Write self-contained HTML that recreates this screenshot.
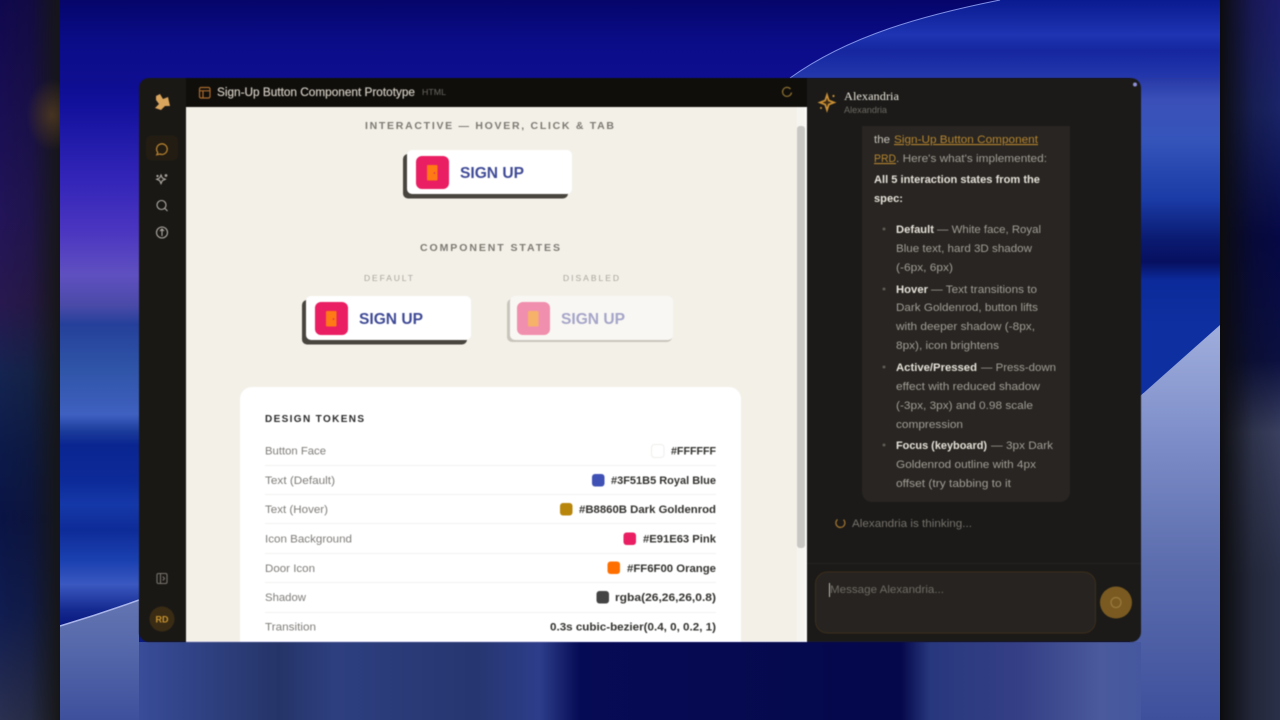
<!DOCTYPE html>
<html><head><meta charset="utf-8"><title>Sign-Up Button Component Prototype</title>
<style>
html,body{margin:0;padding:0;width:1280px;height:720px;overflow:hidden;background:#05084a}
svg{position:absolute;left:0;top:0;display:block}
#ui{filter:blur(.45px)}
text{font-family:"Liberation Sans",sans-serif;white-space:pre}
.b{font-weight:700}
.lb{font-size:11px;fill:#7f7d79}
.vl{font-size:11px;font-weight:700;fill:#33322f}
.ch{font-size:11px;fill:#a19d95}
.st{font-size:11px;font-weight:700;fill:#e6e2d9}
</style></head><body>
<svg width="1280" height="720" viewBox="0 0 1280 720">
<defs>
<linearGradient id="lft" x1="0" y1="0" x2="0" y2="1">
<stop offset="0" stop-color="#050565"/><stop offset=".14" stop-color="#10109a"/><stop offset=".25" stop-color="#3325b8"/><stop offset=".32" stop-color="#4a35c0"/><stop offset=".382" stop-color="#5f50c0"/><stop offset=".424" stop-color="#4a4aa8"/><stop offset=".451" stop-color="#25409a"/><stop offset=".514" stop-color="#2f55a8"/><stop offset=".576" stop-color="#3f60c0"/><stop offset=".6" stop-color="#1a3a9a"/><stop offset=".618" stop-color="#0a2590"/><stop offset=".667" stop-color="#0c2a98"/><stop offset=".701" stop-color="#1538a8"/><stop offset=".736" stop-color="#0e2c98"/><stop offset=".778" stop-color="#1a40b0"/><stop offset=".812" stop-color="#3a58c0"/><stop offset=".847" stop-color="#152a90"/><stop offset=".865" stop-color="#0a1a80"/><stop offset="1" stop-color="#0a1a80"/>
</linearGradient>
<linearGradient id="rgt" x1="0" y1="0" x2="0" y2="1">
<stop offset="0" stop-color="#0a1a90"/><stop offset=".035" stop-color="#2038b0"/><stop offset=".097" stop-color="#2030a0"/><stop offset=".139" stop-color="#3a50b8"/><stop offset=".194" stop-color="#3555bb"/><stop offset=".278" stop-color="#1a3aa5"/><stop offset=".333" stop-color="#0a1a70"/><stop offset=".364" stop-color="#071060"/><stop offset=".389" stop-color="#0c2a9a"/><stop offset=".45" stop-color="#0e2fa0"/><stop offset="1" stop-color="#0e2fa0"/>
</linearGradient>
<linearGradient id="lgt" x1="0" y1="0" x2="0" y2="1">
<stop offset="0" stop-color="#a0aedc"/><stop offset=".3" stop-color="#7c8cc8"/><stop offset=".6" stop-color="#5d6eae"/><stop offset="1" stop-color="#3e509c"/>
</linearGradient>
<linearGradient id="bot" gradientUnits="userSpaceOnUse" x1="139" y1="0" x2="1141" y2="0">
<stop offset="0" stop-color="#384c98"/><stop offset=".14" stop-color="#253468"/><stop offset=".195" stop-color="#2e3f80"/><stop offset=".335" stop-color="#263670"/><stop offset=".4" stop-color="#2d3d8a"/><stop offset=".44" stop-color="#060b55"/><stop offset=".76" stop-color="#05084a"/><stop offset=".79" stop-color="#28387e"/><stop offset=".88" stop-color="#353f85"/><stop offset=".96" stop-color="#4a5a9c"/><stop offset="1" stop-color="#45579f"/>
</linearGradient>
<linearGradient id="arcb" x1="0" y1="0" x2="0" y2="1">
<stop offset="0" stop-color="#6575b2"/><stop offset=".4" stop-color="#5568aa"/><stop offset="1" stop-color="#3e509c"/>
</linearGradient>
<linearGradient id="top" x1="0" y1="0" x2="0" y2="1">
<stop offset="0" stop-color="#05056a"/><stop offset=".5" stop-color="#0a0c86"/><stop offset="1" stop-color="#0e0e90"/>
</linearGradient>
<linearGradient id="topr" x1="0" y1="0" x2="0" y2="1">
<stop offset="0" stop-color="#0a1a90"/><stop offset=".45" stop-color="#1e34b2"/><stop offset=".65" stop-color="#15269f"/><stop offset="1" stop-color="#2438ac"/>
</linearGradient>
<linearGradient id="sl" x1="0" y1="0" x2="0" y2="1">
<stop offset="0" stop-color="#10084e"/><stop offset=".3" stop-color="#221458"/><stop offset=".42" stop-color="#28184f"/><stop offset=".52" stop-color="#142450"/><stop offset=".62" stop-color="#0c1a4a"/><stop offset=".72" stop-color="#0a1445"/><stop offset=".85" stop-color="#101c50"/><stop offset="1" stop-color="#2a3050"/>
</linearGradient>
<linearGradient id="slf" x1="0" y1="0" x2="1" y2="0">
<stop offset="0" stop-color="#161616" stop-opacity="0"/><stop offset=".5" stop-color="#161616" stop-opacity=".2"/><stop offset="1" stop-color="#161616"/>
</linearGradient>
<linearGradient id="sr" x1="0" y1="0" x2="0" y2="1">
<stop offset="0" stop-color="#1c1c6c"/><stop offset=".15" stop-color="#1a2468"/><stop offset=".33" stop-color="#050845"/><stop offset=".5" stop-color="#0b1040"/><stop offset=".6" stop-color="#3a4060"/><stop offset=".8" stop-color="#2a3048"/><stop offset="1" stop-color="#2a3048"/>
</linearGradient>
<linearGradient id="srf" x1="0" y1="0" x2="1" y2="0">
<stop offset="0" stop-color="#0c0c0e"/><stop offset=".55" stop-color="#0c0c0e" stop-opacity=".25"/><stop offset="1" stop-color="#0c0c0e" stop-opacity="0"/>
</linearGradient>
<radialGradient id="glow"><stop offset="0" stop-color="#5a4020" stop-opacity=".7"/><stop offset="1" stop-color="#5a4020" stop-opacity="0"/></radialGradient>
<clipPath id="ls"><rect x="0" y="0" width="60" height="720"/></clipPath>
</defs>
<rect x="60" y="0" width="1160" height="720" fill="#0a0c86"/>
<rect x="60" y="0" width="90" height="720" fill="url(#lft)"/>
<rect x="1130" y="0" width="90" height="720" fill="url(#rgt)"/>
<path d="M1130 405L1220 325V720H1130Z" fill="url(#lgt)"/>
<rect x="60" y="0" width="1160" height="78" fill="url(#top)"/>
<path d="M790 78C850 35 925 15 1000 0H1220V78Z" fill="url(#topr)"/>
<path d="M790 78C850 35 925 15 1000 0" fill="none" stroke="#7f8fe6" stroke-width="1"/>
<path d="M60 626Q100 614 139 600V720H60Z" fill="url(#arcb)"/>
<path d="M60 626Q100 614 139 600" fill="none" stroke="#a9b5ea" stroke-width="1.5"/>
<rect x="139" y="642" width="1002" height="78" fill="url(#bot)"/>
<rect x="0" y="0" width="60" height="720" fill="url(#sl)"/>
<rect x="0" y="0" width="60" height="720" fill="url(#slf)"/>
<ellipse cx="52" cy="115" rx="26" ry="36" fill="url(#glow)" clip-path="url(#ls)"/>
<rect x="1220" y="0" width="60" height="720" fill="url(#sr)"/>
<rect x="1220" y="0" width="60" height="720" fill="url(#srf)"/>
</svg>

<svg id="ui" width="1280" height="720" viewBox="0 0 1280 720">
<defs><clipPath id="win"><rect x="139" y="78" width="1002" height="564" rx="10"/></clipPath></defs>
<g clip-path="url(#win)">
<rect x="139" y="78" width="47" height="564" fill="#1a1815"/>
<rect x="186" y="78" width="621" height="29" fill="#100e0b"/>
<rect x="186" y="107" width="620" height="535" fill="#f3f0e8"/>
<rect x="797" y="107" width="8" height="535" fill="#f6f4ef"/>
<rect x="797" y="126" width="8" height="422" rx="3" fill="#c8c7c3"/>
<rect x="805" y="107" width="2" height="535" fill="#fbfbfa"/>
<rect x="807" y="78" width="334" height="564" fill="#1b1a18"/>
<rect x="240" y="387" width="501" height="270" rx="12" fill="#fff"/>
</g>
<circle cx="1135" cy="84.500" r="2" fill="#8f8fd6"/>

<!-- sidebar -->
<path d="M156 96L160 94L163 99L168 97L170 106L165 106L161 110L155 108L159 104L156 100Z" fill="#d9a45c"/>
<rect x="146" y="135.500" width="32" height="25" rx="5" fill="#221c12"/>
<path d="M157.800 152.500a5.300 5.300 0 1 1 2 1.500l-3 .8z" fill="none" stroke="#b5802f" stroke-width="1.300"/>
<g fill="none" stroke="#b0aca4" stroke-width="1.100">
<path d="M161 175l1.300 3 3 1.300-3 1.300-1.300 3-1.300-3-3-1.300 3-1.300z"/>
<circle cx="166" cy="175.500" r=".8"/>
<circle cx="157.500" cy="176" r=".6"/>
<circle cx="161.500" cy="205" r="4.500"/><path d="M165 208.500l2.500 2.500"/>
<circle cx="162" cy="232.500" r="5.500"/><path d="M162 236v-7M160 231l2-2 2 2"/>
<rect x="157" y="573.500" width="10" height="10" rx="1.500" stroke="#77736c"/><path d="M160.500 573.500v10" stroke="#77736c"/><path d="M162.800 576.500l1.700 2-1.700 2" stroke="#77736c"/>
</g>
<circle cx="162" cy="619" r="12.500" fill="#3a2c14"/>
<text x="155.500" y="622.500" textLength="13" lengthAdjust="spacingAndGlyphs" class="b" font-size="9" fill="#c8922e">RD</text>

<!-- artifact header -->
<g fill="none" stroke="#a96b2e" stroke-width="1.200"><rect x="199.500" y="87.500" width="10.500" height="10.500" rx="1.500"/><path d="M199.500 90.800h10.500M203 90.800v7.200"/></g>
<text x="217" y="96" textLength="198" lengthAdjust="spacingAndGlyphs" font-size="11.500" fill="#cfcabf" stroke="#cfcabf" stroke-width=".2">Sign-Up Button Component Prototype</text>
<text x="422" y="95" textLength="24" lengthAdjust="spacingAndGlyphs" font-size="8" fill="#6b6860">HTML</text>
<path d="M790.500 89a4.500 4.500 0 1 0 1 3.500" fill="none" stroke="#8a7030" stroke-width="1.200"/>

<!-- interactive -->
<text x="365" y="129" textLength="249" lengthAdjust="spacing" class="b" font-size="10.500" fill="#7d7a73">INTERACTIVE — HOVER, CLICK &amp; TAB</text>
<rect x="403" y="154" width="165" height="44.500" rx="5" fill="#48443e"/>
<rect x="407" y="150" width="165" height="44" rx="5" fill="#fff"/>
<rect x="416" y="156" width="33" height="33" rx="6" fill="#e91e63"/>
<rect x="427" y="165" width="10.500" height="15.500" rx="1" fill="#ff7a14"/><circle cx="434.500" cy="173" r=".8" fill="#e91e63"/>
<text x="460" y="178" textLength="64" lengthAdjust="spacingAndGlyphs" class="b" font-size="16" fill="#3f4a96">SIGN UP</text>

<text x="420" y="251" textLength="140" lengthAdjust="spacing" class="b" font-size="10.500" fill="#7d7a73">COMPONENT STATES</text>
<text x="364" y="281" textLength="49" lengthAdjust="spacing" font-size="8.500" fill="#a8a59d">DEFAULT</text>
<text x="563" y="281" textLength="56" lengthAdjust="spacing" font-size="8.500" fill="#a8a59d">DISABLED</text>

<rect x="302" y="300" width="165" height="44.500" rx="5" fill="#48443e"/>
<rect x="306" y="296" width="165" height="44" rx="5" fill="#fff"/>
<rect x="315" y="302" width="33" height="33" rx="6" fill="#e91e63"/>
<rect x="326" y="311" width="10.500" height="15.500" rx="1" fill="#ff7a14"/><circle cx="333.500" cy="319" r=".8" fill="#e91e63"/>
<text x="359" y="324" textLength="64" lengthAdjust="spacingAndGlyphs" class="b" font-size="16" fill="#3f4a96">SIGN UP</text>

<rect x="507" y="299" width="165" height="43" rx="5" fill="#c9c5bc"/>
<rect x="510" y="296" width="163" height="44" rx="5" fill="#f9f7f3"/>
<rect x="517" y="302" width="33" height="33" rx="6" fill="#f08fae"/>
<rect x="528" y="311" width="10.500" height="15.500" rx="1" fill="#f7b26a"/>
<text x="561" y="324" textLength="64" lengthAdjust="spacingAndGlyphs" class="b" font-size="16" fill="#a5a5c9">SIGN UP</text>

<!-- tokens -->
<text x="265" y="422" textLength="99" lengthAdjust="spacing" class="b" font-size="10" fill="#2a2a2a">DESIGN TOKENS</text>
<g stroke="#f2f1ee" stroke-width="1"><path d="M265 465.500H716M265 494.500H716M265 523.500H716M265 553.500H716M265 582.500H716M265 612.500H716"/></g>
<text class="lb" x="265" y="454.500" textLength="61" lengthAdjust="spacingAndGlyphs">Button Face</text>
<text class="lb" x="265" y="484" textLength="70" lengthAdjust="spacingAndGlyphs">Text (Default)</text>
<text class="lb" x="265" y="513" textLength="63" lengthAdjust="spacingAndGlyphs">Text (Hover)</text>
<text class="lb" x="265" y="542.500" textLength="87" lengthAdjust="spacingAndGlyphs">Icon Background</text>
<text class="lb" x="265" y="572" textLength="50" lengthAdjust="spacingAndGlyphs">Door Icon</text>
<text class="lb" x="265" y="601" textLength="41" lengthAdjust="spacingAndGlyphs">Shadow</text>
<text class="lb" x="265" y="630.500" textLength="51" lengthAdjust="spacingAndGlyphs">Transition</text>
<rect x="651.500" y="444.500" width="12.500" height="13" rx="3" fill="#fff" stroke="#eeeeec"/>
<rect x="592" y="474" width="12.500" height="12.500" rx="3" fill="#3f51b5"/>
<rect x="560" y="503" width="12.500" height="12.500" rx="3" fill="#b8860b"/>
<rect x="623.500" y="532.500" width="12.500" height="12.500" rx="3" fill="#e91e63"/>
<rect x="607.500" y="561.500" width="12.500" height="12.500" rx="3" fill="#ff6f00"/>
<rect x="596.500" y="591" width="12.500" height="12.500" rx="3" fill="#444"/>
<text class="vl" x="671" y="454.500" textLength="45" lengthAdjust="spacingAndGlyphs">#FFFFFF</text>
<text class="vl" x="611" y="484" textLength="105" lengthAdjust="spacingAndGlyphs">#3F51B5 Royal Blue</text>
<text class="vl" x="579" y="513" textLength="137" lengthAdjust="spacingAndGlyphs">#B8860B Dark Goldenrod</text>
<text class="vl" x="643" y="542.500" textLength="73" lengthAdjust="spacingAndGlyphs">#E91E63 Pink</text>
<text class="vl" x="627" y="572" textLength="89" lengthAdjust="spacingAndGlyphs">#FF6F00 Orange</text>
<text class="vl" x="615" y="601" textLength="101" lengthAdjust="spacingAndGlyphs">rgba(26,26,26,0.8)</text>
<text class="vl" x="550" y="630.500" textLength="166" lengthAdjust="spacingAndGlyphs">0.3s cubic-bezier(0.4, 0, 0.2, 1)</text>

<!-- chat header -->
<path d="M827 95l1.800 5.500 5.200 2-5.200 2-1.800 5.500-1.800-5.500-5.200-2 5.200-2z" fill="#3a2a14" stroke="#c98f35" stroke-width="1.800"/>
<circle cx="833.500" cy="96" r="1.100" fill="#c98f35"/><circle cx="821" cy="108" r="1" fill="#c98f35"/>
<text x="844" y="100" textLength="55" lengthAdjust="spacingAndGlyphs" style="font-family:'Liberation Serif',serif" font-size="12" fill="#e8e4da">Alexandria</text>
<text x="844" y="113" textLength="43" lengthAdjust="spacingAndGlyphs" font-size="9" fill="#6f6b64">Alexandria</text>

<!-- bubble -->
<path d="M862 126H1070V492a10 10 0 0 1-10 10H872a10 10 0 0 1-10-10Z" fill="#282522"/>
<text class="ch" x="874" y="143" textLength="16" lengthAdjust="spacingAndGlyphs" style="fill:#c9c5bc">the</text>
<text class="ch" x="894" y="143" textLength="144" lengthAdjust="spacingAndGlyphs" style="fill:#b5852e" text-decoration="underline">Sign-Up Button Component</text>
<text class="ch" x="874" y="162" textLength="22" lengthAdjust="spacingAndGlyphs" style="fill:#b5852e" text-decoration="underline">PRD</text>
<text class="ch" x="896" y="162" textLength="151" lengthAdjust="spacingAndGlyphs">. Here's what's implemented:</text>
<text class="st" x="874" y="183" textLength="166" lengthAdjust="spacingAndGlyphs">All 5 interaction states from the</text>
<text class="st" x="874" y="202" textLength="29" lengthAdjust="spacingAndGlyphs">spec:</text>
<g fill="#5f5b54"><circle cx="884" cy="229" r="1.500"/><circle cx="884" cy="289" r="1.500"/><circle cx="884" cy="367" r="1.500"/><circle cx="884" cy="445" r="1.500"/></g>
<text class="st" x="896" y="233" textLength="38" lengthAdjust="spacingAndGlyphs">Default</text>
<text class="ch" x="937" y="233" textLength="104" lengthAdjust="spacingAndGlyphs">— White face, Royal</text>
<text class="ch" x="896" y="252" textLength="136" lengthAdjust="spacingAndGlyphs">Blue text, hard 3D shadow</text>
<text class="ch" x="896" y="271" textLength="57" lengthAdjust="spacingAndGlyphs">(-6px, 6px)</text>
<text class="st" x="896" y="293" textLength="32" lengthAdjust="spacingAndGlyphs">Hover</text>
<text class="ch" x="931" y="293" textLength="106" lengthAdjust="spacingAndGlyphs">— Text transitions to</text>
<text class="ch" x="896" y="311" textLength="142" lengthAdjust="spacingAndGlyphs">Dark Goldenrod, button lifts</text>
<text class="ch" x="896" y="330" textLength="139" lengthAdjust="spacingAndGlyphs">with deeper shadow (-8px,</text>
<text class="ch" x="896" y="349" textLength="103" lengthAdjust="spacingAndGlyphs">8px), icon brightens</text>
<text class="st" x="896" y="371" textLength="81" lengthAdjust="spacingAndGlyphs">Active/Pressed</text>
<text class="ch" x="981" y="371" textLength="75" lengthAdjust="spacingAndGlyphs">— Press-down</text>
<text class="ch" x="896" y="390" textLength="144" lengthAdjust="spacingAndGlyphs">effect with reduced shadow</text>
<text class="ch" x="896" y="409" textLength="137" lengthAdjust="spacingAndGlyphs">(-3px, 3px) and 0.98 scale</text>
<text class="ch" x="896" y="428" textLength="67" lengthAdjust="spacingAndGlyphs">compression</text>
<text class="st" x="896" y="449" textLength="91" lengthAdjust="spacingAndGlyphs">Focus (keyboard)</text>
<text class="ch" x="991" y="449" textLength="62" lengthAdjust="spacingAndGlyphs">— 3px Dark</text>
<text class="ch" x="896" y="468" textLength="140" lengthAdjust="spacingAndGlyphs">Goldenrod outline with 4px</text>
<text class="ch" x="896" y="487" textLength="115" lengthAdjust="spacingAndGlyphs">offset (try tabbing to it</text>

<!-- thinking -->
<path d="M837.500 519.500a4.500 4.500 0 1 0 6 .2" fill="none" stroke="#9a7030" stroke-width="1.300"/>
<text x="852" y="527" textLength="120" lengthAdjust="spacingAndGlyphs" font-size="11" fill="#77736c">Alexandria is thinking...</text>
<path d="M807 563.500H1141" stroke="#232220"/>
<rect x="815.500" y="572" width="280" height="61" rx="12" fill="#262320" stroke="#3d2e1c"/>
<rect x="829" y="583" width="1" height="14" fill="#bdbab3"/>
<text x="830" y="593" textLength="114" lengthAdjust="spacingAndGlyphs" font-size="11" fill="#6f6b64">Message Alexandria...</text>
<circle cx="1116" cy="602.500" r="16" fill="#7a5a20"/>
<circle cx="1116" cy="602.500" r="5" fill="none" stroke="#9a7a3c" stroke-width="1.200"/>
</svg>
</body></html>
